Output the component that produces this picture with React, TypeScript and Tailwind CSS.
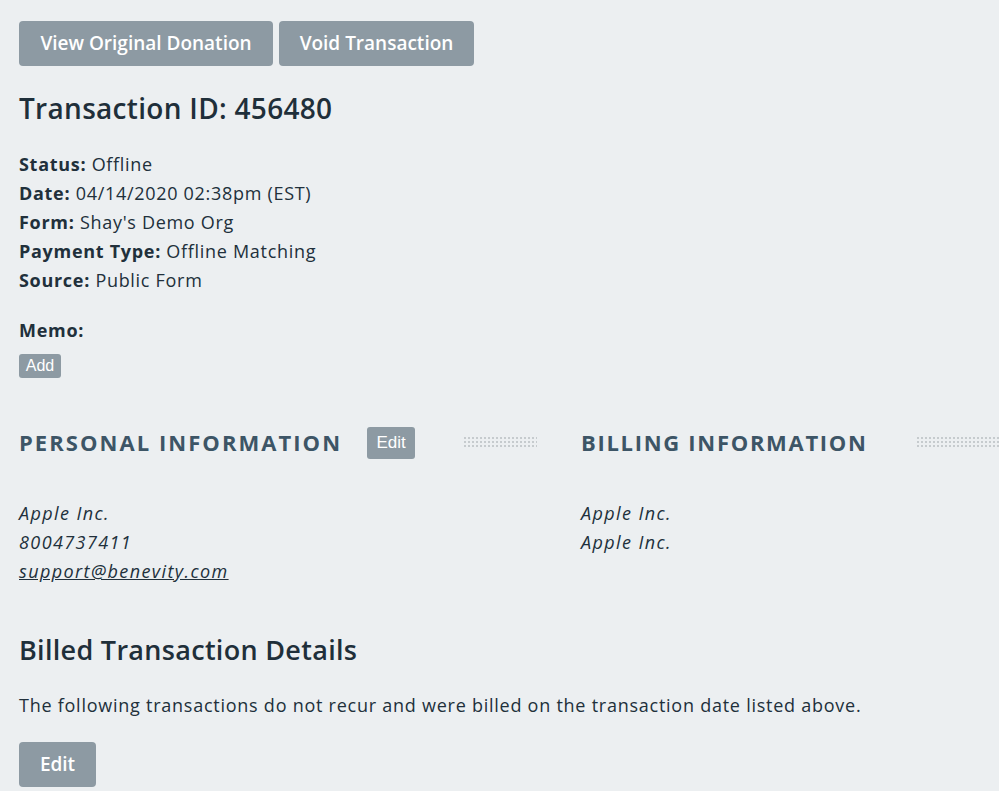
const font = "font-['Open_Sans',sans-serif]";

function SectionHeading({ title, edit, tracking }: { title: string; edit?: boolean; tracking: string }) {
  return (
    <div className="flex h-[32px] items-center">
      <h2 className={`pb-[3px] text-[22px] font-bold uppercase text-[#3d5566] leading-none ${tracking}`}>
        {title}
      </h2>
      {edit && (
        <button className="ml-[25px] h-[32px] w-[48px] rounded-[3px] bg-[#8d9aa3] font-['Liberation_Sans',sans-serif] text-[17px] text-white">
          Edit
        </button>
      )}
      <div className="ml-[48px] mt-[-2px] h-[12px] flex-1 bg-[radial-gradient(circle,#c6cbce_0.9px,transparent_1.2px)] bg-[length:4px_4px]" />
    </div>
  );
}

export default function App() {
  const details = [
    ['Status:', 'Offline'],
    ['Date:', '04/14/2020 02:38pm (EST)'],
    ['Form:', "Shay's Demo Org"],
    ['Payment Type:', 'Offline Matching'],
    ['Source:', 'Public Form'],
  ];

  return (
    <div className={`min-h-screen bg-[#eceff1] pt-[21px] pl-[19px] text-[#21303b] ${font}`}>
      <div className="flex gap-[6px]">
        <button className="h-[45px] w-[254px] rounded-[4px] bg-[#8d9aa3] text-[19px] font-semibold text-white">
          View Original Donation
        </button>
        <button className="h-[45px] w-[195px] rounded-[4px] bg-[#8d9aa3] text-[19px] font-semibold text-white">
          Void Transaction
        </button>
      </div>

      <h1 className="mt-[25px] text-[28px] leading-[34px] font-semibold tracking-[0.3px] text-[#1f2f3a]">
        Transaction ID: 456480
      </h1>

      <div className="mt-[25px] text-[18px] leading-[29px] tracking-[0.7px]">
        {details.map(([label, value]) => (
          <div key={label}>
            <span className="font-bold">{label}</span> {value}
          </div>
        ))}
      </div>

      <div className="mt-[21px] text-[18px] leading-[29px] font-bold tracking-[0.7px]">Memo:</div>
      <button className="mt-[9px] h-[24px] w-[42px] rounded-[3px] bg-[#8d9aa3] font-['Liberation_Sans',sans-serif] text-[16px] text-white">
        Add
      </button>

      <div className="mt-[49px] flex">
        <div className="w-[562px] pr-[44px]">
          <SectionHeading title="Personal Information" edit tracking="tracking-[2.05px]" />
          <div className="mt-[40px] text-[18px] leading-[29px] italic tracking-[1.4px]">
            <div>Apple Inc.</div>
            <div>8004737411</div>
            <a className="underline">support@benevity.com</a>
          </div>
        </div>
        <div className="flex-1">
          <SectionHeading title="Billing Information" tracking="tracking-[1.7px]" />
          <div className="mt-[40px] text-[18px] leading-[29px] italic tracking-[1.4px]">
            <div>Apple Inc.</div>
            <div>Apple Inc.</div>
          </div>
        </div>
      </div>

      <h2 className="mt-[47px] text-[27px] leading-[34px] font-semibold tracking-[0.3px] text-[#1f2f3a]">
        Billed Transaction Details
      </h2>
      <p className="mt-[24px] text-[18px] leading-[29px] tracking-[0.75px]">
        The following transactions do not recur and were billed on the transaction date listed above.
      </p>
      <button className="mt-[22px] h-[45px] w-[77px] rounded-[4px] bg-[#8d9aa3] text-[19px] font-semibold text-white">
        Edit
      </button>
    </div>
  );
}
